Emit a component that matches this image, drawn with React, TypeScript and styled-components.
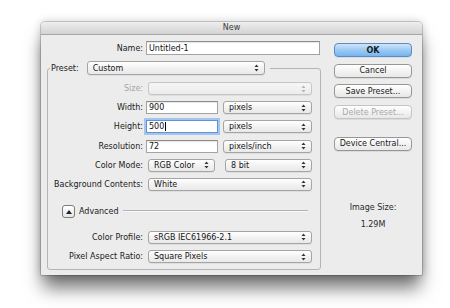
import React from "react";
import styled, { createGlobalStyle, css } from "styled-components";

const Global = createGlobalStyle`
  html, body { margin: 0; padding: 0; background: #ffffff; }
  body {
    width: 450px;
    height: 308px;
    overflow: hidden;
    font-family: "DejaVu Sans", "Liberation Sans", sans-serif;
  }
`;

const Stage = styled.div`
  padding: 22px 0 0 41px;
`;

const Window = styled.div`
  width: 381px;
  height: 253px;
  display: flex;
  flex-direction: column;
  background: #ececec;
  border-radius: 4px 4px 1px 1px;
  box-shadow: 0 0 0 1px rgba(0, 0, 0, 0.16), 0 15px 18px -2px rgba(0, 0, 0, 0.55),
    0 0 10px rgba(0, 0, 0, 0.22);
`;

const TitleBar = styled.div`
  height: 12px;
  line-height: 12px;
  text-align: center;
  font-size: 8px;
  color: #3a3a3a;
  border-bottom: 1px solid #a6a6a6;
  border-radius: 4px 4px 0 0;
  background: linear-gradient(#eeeeee, #d3d3d3);
`;

const Content = styled.div`
  flex: 1;
  display: flex;
  gap: 13px;
  padding: 6px 10px 6px 6px;
`;

const LeftCol = styled.div`
  width: 274px;
  display: flex;
  flex-direction: column;
  gap: 6px;
`;

const NameRow = styled.div`
  display: grid;
  grid-template-columns: 96px 174px;
  column-gap: 3px;
  align-items: center;
  height: 14px;
`;

const Label = styled.div<{ $disabled?: boolean }>`
  font-size: 8px;
  line-height: 13px;
  text-align: right;
  white-space: nowrap;
  color: ${(p) => (p.$disabled ? "#a6a6a6" : "#1a1a1a")};
`;

const Field = styled.div<{ $width: number; $height?: number; $focused?: boolean }>`
  box-sizing: border-box;
  width: ${(p) => p.$width}px;
  height: ${(p) => p.$height ?? 13}px;
  display: flex;
  align-items: center;
  padding: 0 2px;
  font-size: 8px;
  color: #111;
  background: #ffffff;
  border: 1px solid #a3a3a3;
  border-top-color: #8c8c8c;
  box-shadow: inset 0 1px 1px rgba(0, 0, 0, 0.1);
  ${(p) =>
    p.$focused &&
    css`
      border-color: #5f93d6;
      box-shadow: 0 0 0 2px #a3c5ef;
    `}
`;

const Caret = styled.span`
  display: inline-block;
  width: 1px;
  height: 9px;
  margin-left: 1px;
  background: #000;
`;

const Group = styled.fieldset`
  flex: 1;
  min-width: 0;
  margin: 0;
  padding: 7px 8px 6px 0;
  border: 1px solid #b4b4b4;
  border-radius: 3px;
  display: flex;
  flex-direction: column;
  gap: 6.2px;
`;

const Legend = styled.legend`
  display: flex;
  align-items: center;
  gap: 8px;
  margin-left: 2px;
  padding: 0 5px 0 1px;
`;

const LegendLabel = styled.span`
  font-size: 8px;
  color: #1a1a1a;
  white-space: nowrap;
`;

const Row = styled.div`
  display: grid;
  grid-template-columns: 95px auto;
  column-gap: 3px;
  align-items: center;
  height: 13px;
`;

const Controls = styled.div`
  display: flex;
  align-items: center;
`;

const PopupBox = styled.div<{ $width: number; $ml?: number; $height?: number; $disabled?: boolean }>`
  box-sizing: border-box;
  width: ${(p) => p.$width}px;
  height: ${(p) => p.$height ?? 13}px;
  margin-left: ${(p) => p.$ml ?? 0}px;
  display: flex;
  align-items: center;
  justify-content: space-between;
  padding: 0 5px 0 5px;
  font-size: 8px;
  white-space: nowrap;
  border-radius: 3px;
  color: ${(p) => (p.$disabled ? "#a6a6a6" : "#151515")};
  border: 1px solid ${(p) => (p.$disabled ? "#c6c6c6" : "#a4a4a4")};
  background: ${(p) =>
    p.$disabled ? "linear-gradient(#f6f6f6, #ececec)" : "linear-gradient(#ffffff, #f1f1f1 55%, #e9e9e9)"};
  box-shadow: 0 1px 0 rgba(0, 0, 0, 0.06);
`;

const Arrows = ({ color }: { color: string }) => (
  <svg width="5" height="8" viewBox="0 0 5 8">
    <polygon points="2.5,0.5 4.5,3 0.5,3" fill={color} />
    <polygon points="0.5,5 4.5,5 2.5,7.5" fill={color} />
  </svg>
);

const Popup = ({
  value,
  width,
  ml,
  height,
  disabled,
}: {
  value: string;
  width: number;
  ml?: number;
  height?: number;
  disabled?: boolean;
}) => (
  <PopupBox $width={width} $ml={ml} $height={height} $disabled={disabled}>
    <span>{value}</span>
    <Arrows color={disabled ? "#b4b4b4" : "#333"} />
  </PopupBox>
);

const AdvancedRow = styled.div`
  display: flex;
  align-items: center;
  height: 13px;
  padding-left: 14px;
  margin: 8px 0 6.6px;
`;

const Disclosure = styled.div`
  box-sizing: border-box;
  width: 13px;
  height: 13px;
  display: flex;
  align-items: center;
  justify-content: center;
  border: 1px solid #7d7d7d;
  border-radius: 3px;
  background: linear-gradient(#ffffff, #e6e6e6);
`;

const AdvancedText = styled.span`
  margin-left: 4px;
  font-size: 8px;
  color: #1a1a1a;
`;

const Rule = styled.div`
  flex: 1;
  margin: 0 4px 2px 4px;
  border-top: 1px solid #b3b3b3;
  border-bottom: 1px solid #f8f8f8;
`;

const RightCol = styled.div`
  width: 78px;
  display: flex;
  flex-direction: column;
  gap: 6.7px;
  padding-top: 2px;
`;

const Button = styled.div<{ $primary?: boolean; $disabled?: boolean; $gapBefore?: number }>`
  box-sizing: border-box;
  height: 14px;
  margin-top: ${(p) => p.$gapBefore ?? 0}px;
  display: flex;
  align-items: center;
  justify-content: center;
  font-size: 8px;
  white-space: nowrap;
  border-radius: 4px;
  color: ${(p) => (p.$disabled ? "#a8a8a8" : "#1a1a1a")};
  border: 1px solid ${(p) => (p.$disabled ? "#c4c4c4" : "#969696")};
  background: linear-gradient(#ffffff, #f3f3f3 50%, #e8e8e8);
  box-shadow: 0 1px 0 rgba(0, 0, 0, 0.07);
  ${(p) =>
    p.$primary &&
    css`
      font-weight: bold;
      border-color: #5a8bc4;
      background: linear-gradient(#cfe5fa, #9ccaf3 50%, #75b5ee);
    `}
`;

const ImageInfo = styled.div`
  margin-top: 45px;
  display: flex;
  flex-direction: column;
  align-items: center;
  gap: 5px;
  font-size: 8px;
  line-height: 12px;
  color: #2a2a2a;
`;

export default function App() {
  return (
    <>
      <Global />
      <Stage>
        <Window>
          <TitleBar>New</TitleBar>
          <Content>
            <LeftCol>
              <NameRow>
                <Label>Name:</Label>
                <Field $width={174} $height={14}>Untitled-1</Field>
              </NameRow>
              <Group>
                <Legend>
                  <LegendLabel>Preset:</LegendLabel>
                  <Popup value="Custom" width={178} height={14} />
                </Legend>
                <Row>
                  <Label $disabled>Size:</Label>
                  <Controls>
                    <Popup value="" width={164} ml={2} disabled />
                  </Controls>
                </Row>
                <Row>
                  <Label>Width:</Label>
                  <Controls>
                    <Field $width={72}>900</Field>
                    <Popup value="pixels" width={89} ml={5} />
                  </Controls>
                </Row>
                <Row>
                  <Label>Height:</Label>
                  <Controls>
                    <Field $width={72} $focused>
                      500
                      <Caret />
                    </Field>
                    <Popup value="pixels" width={89} ml={5} />
                  </Controls>
                </Row>
                <Row>
                  <Label>Resolution:</Label>
                  <Controls>
                    <Field $width={72}>72</Field>
                    <Popup value="pixels/inch" width={89} ml={5} />
                  </Controls>
                </Row>
                <Row>
                  <Label>Color Mode:</Label>
                  <Controls>
                    <Popup value="RGB Color" width={67} ml={2} />
                    <Popup value="8 bit" width={87} ml={10} />
                  </Controls>
                </Row>
                <Row>
                  <Label>Background Contents:</Label>
                  <Controls>
                    <Popup value="White" width={164} ml={2} />
                  </Controls>
                </Row>
                <AdvancedRow>
                  <Disclosure>
                    <svg width="6" height="4" viewBox="0 0 6 4">
                      <polygon points="3,0 6,4 0,4" fill="#222" />
                    </svg>
                  </Disclosure>
                  <AdvancedText>Advanced</AdvancedText>
                  <Rule />
                </AdvancedRow>
                <Row>
                  <Label>Color Profile:</Label>
                  <Controls>
                    <Popup value="sRGB IEC61966-2.1" width={164} ml={2} />
                  </Controls>
                </Row>
                <Row>
                  <Label>Pixel Aspect Ratio:</Label>
                  <Controls>
                    <Popup value="Square Pixels" width={164} ml={2} />
                  </Controls>
                </Row>
              </Group>
            </LeftCol>
            <RightCol>
              <Button $primary>OK</Button>
              <Button>Cancel</Button>
              <Button>Save Preset...</Button>
              <Button $disabled>Delete Preset...</Button>
              <Button $gapBefore={11}>Device Central...</Button>
              <ImageInfo>
                <span>Image Size:</span>
                <span>1.29M</span>
              </ImageInfo>
            </RightCol>
          </Content>
        </Window>
      </Stage>
    </>
  );
}
